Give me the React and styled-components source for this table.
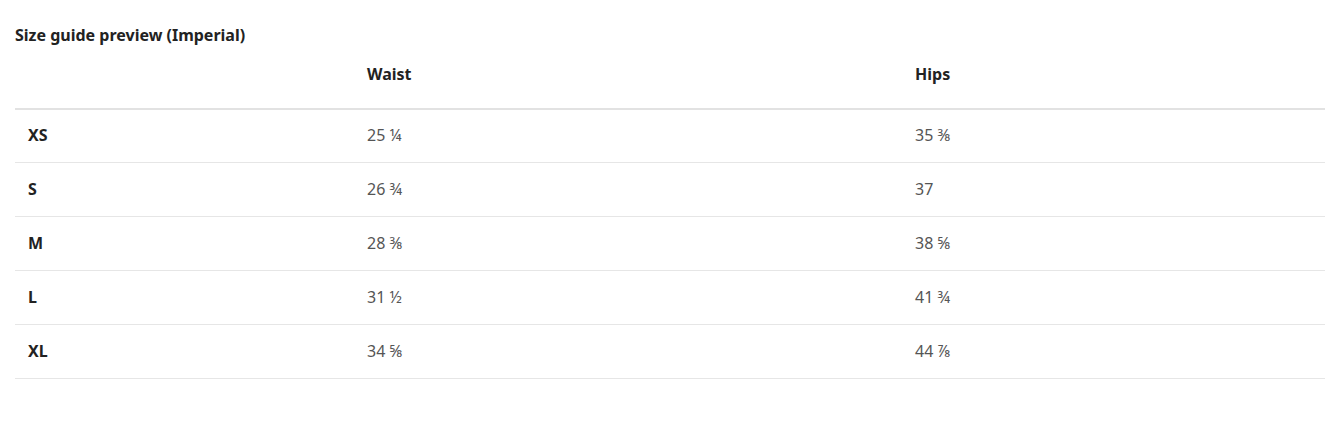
import React from "react";
import styled, { createGlobalStyle } from "styled-components";

const rows = [
  { size: "XS", waist: "25 ¼", hips: "35 ⅜" },
  { size: "S", waist: "26 ¾", hips: "37" },
  { size: "M", waist: "28 ⅜", hips: "38 ⅝" },
  { size: "L", waist: "31 ½", hips: "41 ¾" },
  { size: "XL", waist: "34 ⅝", hips: "44 ⅞" }
];

const App = () => {
  return (
    <Page>
      <GlobalStyle />
      <Title>Size guide preview (Imperial)</Title>
      <Table>
        <colgroup>
          <col style={{ width: "339px" }} />
          <col style={{ width: "548px" }} />
          <col />
        </colgroup>
        <thead>
          <tr>
            <HeadCell />
            <HeadCell>Waist</HeadCell>
            <HeadCell>Hips</HeadCell>
          </tr>
        </thead>
        <tbody>
          {rows.map((r, i) => (
            <tr key={r.size}>
              <Cell $label $first={i === 0}>{r.size}</Cell>
              <Cell $first={i === 0}>{r.waist}</Cell>
              <Cell $first={i === 0}>{r.hips}</Cell>
            </tr>
          ))}
        </tbody>
      </Table>
    </Page>
  );
};

const GlobalStyle = createGlobalStyle({
  body: {
    margin: 0,
    background: "#fff",
    fontFamily: "'Noto Sans', 'Open Sans', Arial, sans-serif"
  }
});

const Page = styled.div({
  padding: "25px 0 0 15px"
});

const Title = styled.h2({
  margin: 0,
  fontSize: "16px",
  lineHeight: "20px",
  fontWeight: 700,
  color: "#222"
});

const Table = styled.table({
  width: "1310px",
  borderCollapse: "collapse",
  tableLayout: "fixed",
  marginTop: "19px"
});

const HeadCell = styled.th({
  textAlign: "left",
  fontSize: "16px",
  lineHeight: "20px",
  fontWeight: 700,
  color: "#222",
  padding: "0 13px 24px",
  borderBottom: "2px solid #e2e2e2"
});

const Cell = styled.td(({ $label, $first }) => ({
  fontSize: "16px",
  lineHeight: "20px",
  fontWeight: $label ? 700 : 400,
  color: $label ? "#222" : "#555",
  padding: `${$first ? 15 : 16}px 13px 17px`,
  borderBottom: "1px solid #e6e6e6"
}));

export default App;
